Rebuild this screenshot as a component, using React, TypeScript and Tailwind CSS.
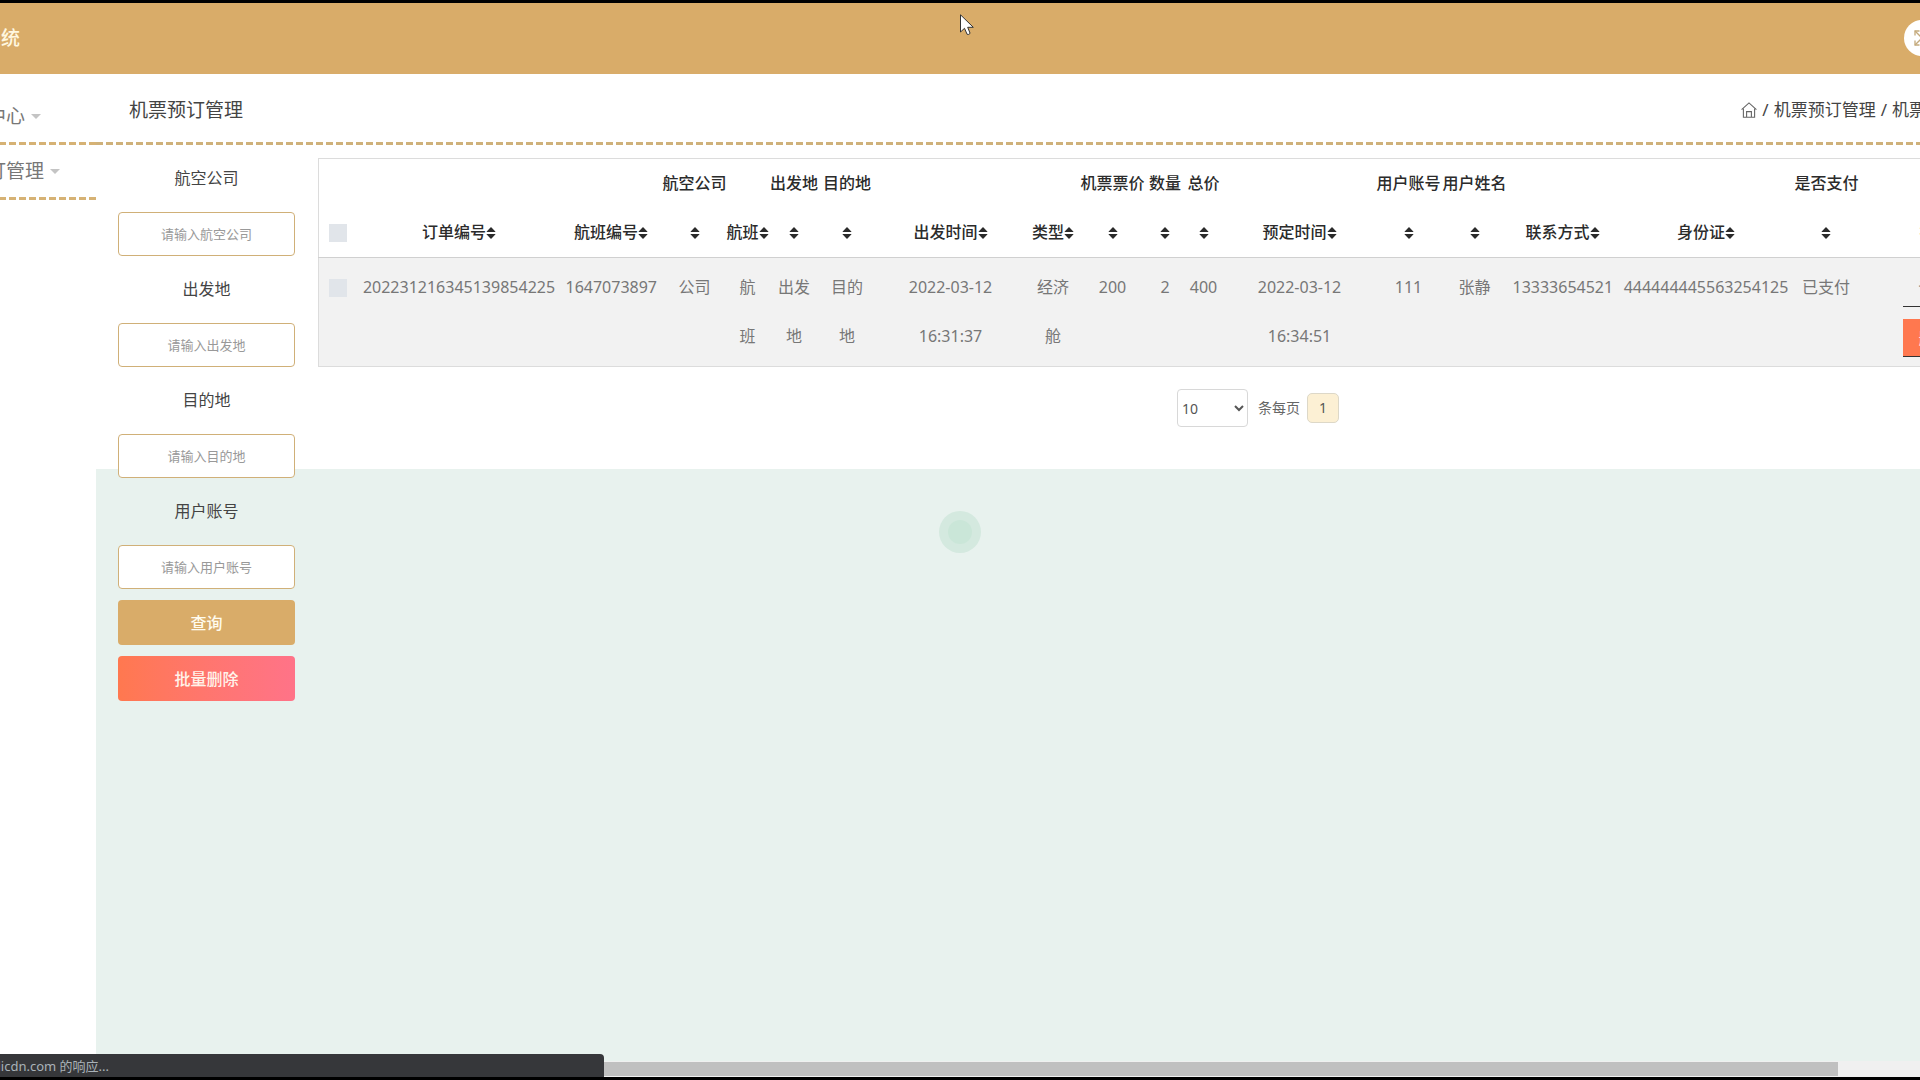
import { useState } from 'react';

type Column = {
  width: string;
  top?: string;
  label?: string;
  value: string;
};

const columns: Column[] = [
  { width: 'w-[203px]', label: '订单编号', value: '202231216345139854225' },
  { width: 'w-[101px]', label: '航班编号', value: '1647073897' },
  { width: 'w-[66px]', top: '航空公司', value: '公司' },
  { width: 'w-[40px]', label: '航班', value: '航班' },
  { width: 'w-[53px]', top: '出发地', value: '出发地' },
  { width: 'w-[53px]', top: '目的地', value: '目的地' },
  { width: 'w-[154px]', label: '出发时间', value: '2022-03-12 16:31:37' },
  { width: 'w-[51px]', label: '类型', value: '经济舱' },
  { width: 'w-[68px]', top: '机票票价', value: '200' },
  { width: 'w-[37px]', top: '数量', value: '2' },
  { width: 'w-[40px]', top: '总价', value: '400' },
  { width: 'w-[152px]', label: '预定时间', value: '2022-03-12 16:34:51' },
  { width: 'w-[66px]', top: '用户账号', value: '111' },
  { width: 'w-[66px]', top: '用户姓名', value: '张静' },
  { width: 'w-[110px]', label: '联系方式', value: '13333654521' },
  { width: 'w-[177px]', label: '身份证', value: '444444445563254125' },
  { width: 'w-[63px]', top: '是否支付', value: '已支付' },
];

const filters = [
  { id: 'company', label: '航空公司' },
  { id: 'from', label: '出发地' },
  { id: 'to', label: '目的地' },
  { id: 'account', label: '用户账号' },
];

const checkboxClass = 'block mx-auto size-[18px] appearance-none bg-[#e1e5ea] checked:bg-[#d9ac69]';

function SortIcon() {
  return (
    <svg width="10" height="12" viewBox="0 0 10 12" className="inline-block shrink-0" fill="#2b2b2b">
      <path d="M5 0 9.3 4.4Q9.6 5 9 5H1Q.4 5 .7 4.4Z" />
      <path d="M5 12 9.3 7.6Q9.6 7 9 7H1Q.4 7 .7 7.6Z" />
    </svg>
  );
}

function HomeIcon() {
  return (
    <svg width="16" height="16" viewBox="0 0 16 16" fill="none" stroke="#666" strokeWidth="1.1">
      <path d="M.6 7.6 8 .9l7.4 6.7" />
      <path d="M2.4 6.4v8.9h11.2V6.4" />
      <path d="M5.6 15V9.6h4.8V15" />
    </svg>
  );
}

function ExpandIcon() {
  return (
    <svg width="16" height="16" viewBox="0 0 16 16" fill="none" stroke="#c4aa7c" strokeWidth="1.3">
      <path d="M1 5.500V1h4.500M10.500 1H15v4.500M15 10.500V15h-4.500M5.500 15H1v-4.500" />
      <path d="m1 1 14 14M15 1 1 15" />
    </svg>
  );
}

function DashLine({ className }: { className: string }) {
  return <div className={`h-[3px] ${className}`} />;
}

function Sidebar() {
  return (
    <nav className="w-24 shrink-0 overflow-hidden bg-white pt-[16px] text-[19px] text-[#777]">
      <a href="#center" className="flex h-[52px] items-center justify-end gap-[6px] pr-[55px] whitespace-nowrap">
        个人中心
        <span className="border-x-5 border-t-5 border-x-transparent border-t-[#c4c4c4]" />
      </a>
      <DashLine className="bg-[repeating-linear-gradient(270deg,#d6b274_0_7px,transparent_7px_10px)]" />
      <a href="#orders" className="flex h-[52px] items-center justify-end gap-[6px] pr-[36px] whitespace-nowrap">
        机票预订管理
        <span className="border-x-5 border-t-5 border-x-transparent border-t-[#c4c4c4]" />
      </a>
      <DashLine className="bg-[repeating-linear-gradient(270deg,#d6b274_0_7px,transparent_7px_10px)]" />
    </nav>
  );
}

function Filters() {
  return (
    <form className="w-[177px] shrink-0" onSubmit={(e) => e.preventDefault()}>
      {filters.map((f) => (
        <div key={f.id}>
          <label htmlFor={f.id} className="block text-center text-base leading-[67px] text-[#444]">
            {f.label}
          </label>
          <input
            id={f.id}
            placeholder={`请输入${f.label}`}
            className="block h-[44px] w-full rounded-[4px] border border-[#d0b078] bg-white text-center text-[13px] text-[#555] outline-none placeholder:text-[#999]"
          />
        </div>
      ))}
      <button
        type="submit"
        className="mt-[11px] block h-[45px] w-full rounded-[4px] bg-[#d9ac69] text-base font-medium text-[#fffbee]"
      >
        查询
      </button>
      <button
        type="button"
        className="mt-[11px] block h-[45px] w-full rounded-[4px] bg-linear-to-r from-[#ff784f] to-[#ff7388] text-base font-medium text-[#fff3ea]"
      >
        批量删除
      </button>
    </form>
  );
}

function OrderTable() {
  return (
    <table className="w-full table-fixed border border-[#dcdcdc] text-center text-base leading-[49px]">
      <thead>
        <tr className="border-b border-[#d0d0d0] align-bottom text-[#2b2b2b]">
          <th className="w-[39px]">
            <div className="flex h-[49px] items-center">
              <input type="checkbox" aria-label="全选" className={checkboxClass} />
            </div>
          </th>
          {columns.map((c, i) => (
            <th key={i} className={`${c.width} font-medium whitespace-nowrap`}>
              {c.top && <div>{c.top}</div>}
              <div className="flex h-[49px] items-center justify-center">
                {c.label}
                <SortIcon />
              </div>
            </th>
          ))}
          <th className="pl-[62px] text-left font-medium">操作</th>
        </tr>
      </thead>
      <tbody>
        <tr className="bg-[#f2f2f2] align-top text-[#777]">
          <td className="py-[5px]">
            <div className="flex h-[49px] items-center">
              <input type="checkbox" aria-label="选择订单" className={checkboxClass} />
            </div>
          </td>
          {columns.map((c, i) => (
            <td key={i} className="p-[5px]">
              {c.value}
            </td>
          ))}
          <td className="pt-[11px] pl-[45px]">
            <div className="flex flex-col items-start gap-3 leading-6">
              <button type="button" className="h-[38px] border-b border-[#333] px-4">
                详情
              </button>
              <button type="button" className="h-[38px] border-b border-[#333] bg-[#ff784f] px-4 text-[#ffe5dc]">
                删除
              </button>
            </div>
          </td>
        </tr>
      </tbody>
    </table>
  );
}

function Pagination() {
  const [size, setSize] = useState('10');
  return (
    <div className="mt-[22px] flex items-center justify-center text-sm text-[#666]">
      <label className="flex items-center gap-[10px]">
        <select
          value={size}
          onChange={(e) => setSize(e.target.value)}
          className="h-[38px] w-[71px] rounded-[4px] border border-[#d8d8d8] bg-white text-[#555]"
        >
          <option>10</option>
          <option>25</option>
          <option>50</option>
        </select>
        条每页
      </label>
      <button type="button" className="ml-[7px] h-[30px] w-8 rounded-[5px] border border-[#ddd8c8] bg-[#fcf0d4] text-[#555]">
        1
      </button>
    </div>
  );
}

export default function App() {
  return (
    <div className="relative flex h-screen flex-col overflow-hidden border-y-3 border-black bg-white font-['Noto_Sans','Noto_Sans_CJK_SC',sans-serif]">
      <header className="flex h-[71px] shrink-0 items-center justify-between overflow-hidden bg-[#d9ac69] pb-[2px]">
        <h1 className="flex w-5 justify-end pt-[2px] text-[19px] font-medium whitespace-nowrap text-[#fff8e0]">
          机票预订系统
        </h1>
        <button type="button" aria-label="全屏" className="-mr-5 flex size-9 items-center justify-center rounded-full bg-white">
          <ExpandIcon />
        </button>
      </header>

      <div className="flex min-h-0 flex-1">
        <Sidebar />
        <main className="min-w-0 flex-1 overflow-hidden bg-[#e8f2ee]">
          <div className="bg-white">
            <div className="-mr-[107px] flex h-[68px] items-center justify-between px-[33px] pt-1">
              <h2 className="text-[19px] text-[#444]">机票预订管理</h2>
              <div className="flex items-center gap-[5px] text-[17px] text-[#444]">
                <a href="#home" aria-label="首页">
                  <HomeIcon />
                </a>
                <span>/</span>
                <a href="#orders">机票预订管理</a>
                <span>/</span>
                <span>机票预订列表</span>
              </div>
            </div>
            <DashLine className="bg-[repeating-linear-gradient(90deg,#cfb17a_0_7px,transparent_7px_10px)]" />
          </div>
          <div className="flex h-[324px] gap-[23px] bg-white pl-[22px]">
            <Filters />
            <div className="w-[1880px] shrink-0 pt-[13px]">
              <OrderTable />
              <Pagination />
            </div>
          </div>
        </main>
      </div>

      <div className="absolute inset-x-0 bottom-0 h-4 bg-[#f0f0f0] py-px">
        <div className="h-full w-[1838px] max-w-full bg-[#c0c0c0]" />
      </div>
      <div className="absolute bottom-0 left-0 flex h-[23px] w-[604px] items-center overflow-hidden rounded-tr-[4px] bg-[#36373a] pt-[2px] text-[13px] text-[#a9b2b8]">
        <span className="flex w-[109px] shrink-0 justify-end whitespace-nowrap">正在等待 alicdn.com 的响应...</span>
      </div>

      <div className="absolute top-[508px] left-1/2 flex size-[42px] -translate-x-1/2 items-center justify-center rounded-full bg-[#d4e9df]">
        <div className="size-6 rounded-full bg-[#cae6d8]" />
      </div>

      <svg className="absolute top-[11px] left-1/2" width="14" height="22" viewBox="0 0 14 22">
        <path
          d="M.5.8V18l4-3.700 2.600 6q1.700.8 3-1L7.700 13.300h5.600Z"
          fill="#fff"
          stroke="#333"
          strokeWidth="1"
        />
      </svg>
    </div>
  );
}
